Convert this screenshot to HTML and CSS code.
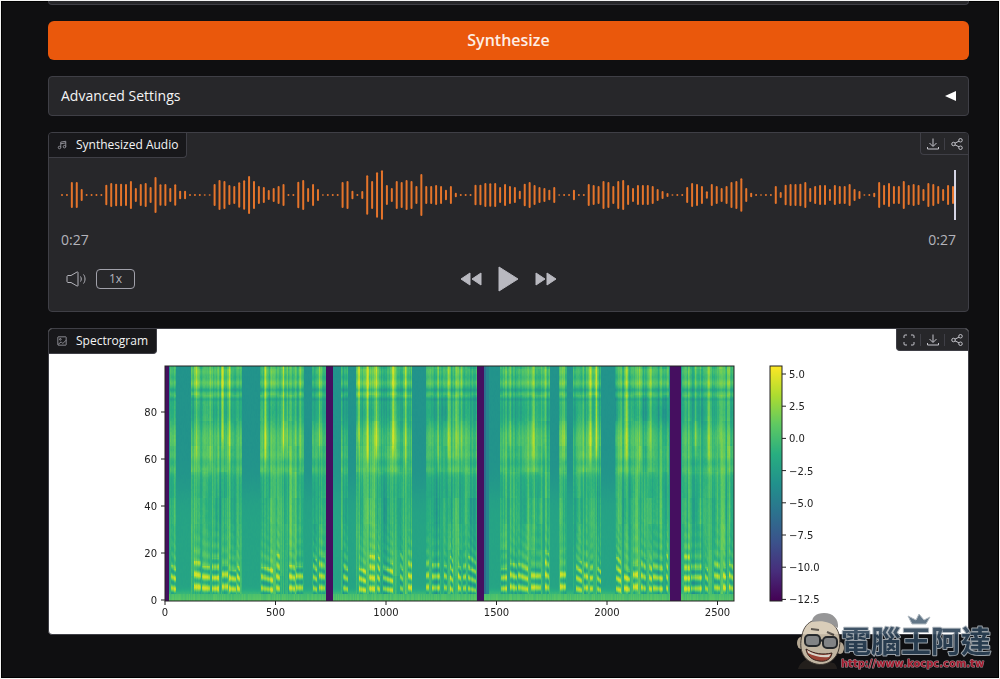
FILE: index.html
```html
<!DOCTYPE html>
<html lang="en">
<head>
  <meta charset="UTF-8">
  <meta name="viewport" content="width=device-width, initial-scale=1.0">
  <title>Synthesize</title>
  <link rel="stylesheet" href="styles.css">
</head>
<body>
  <main class="app">
    <div class="block block-end"></div>
    <button type="button" class="primary">Synthesize</button>
    <button type="button" class="block accordion" aria-expanded="false">
      <span>Advanced Settings</span>
      <svg width="11" height="10" viewBox="0 0 11 10"><path d="M0 5 11 0V10Z" fill="#fff"/></svg>
    </button>

    <section class="block">
      <header class="block-header">
        <h2 class="block-label">
          <svg class="icon" width="10" height="10" viewBox="0 0 24 24"><path d="M9 18V5l12-2v13M9 9l12-2"/><circle cx="6" cy="18" r="3"/><circle cx="18" cy="16" r="3"/></svg>
          Synthesized Audio
        </h2>
        <div class="tools">
          <button type="button" aria-label="Download"><svg class="icon" width="12" height="12" viewBox="0 0 24 24"><path d="M12 1v15M5 10l7 7 7-7M1 18v4h22v-4"/></svg></button>
          <button type="button" aria-label="Share"><svg class="icon" width="12" height="12" viewBox="0 0 24 24"><circle cx="19" cy="4.500" r="3.500"/><circle cx="5" cy="12" r="3.500"/><circle cx="19" cy="19.500" r="3.500"/><path d="m8 10.300 8-4M8 13.700l8 4"/></svg></button>
        </div>
      </header>
      <div class="player">
        <svg id="waveform" class="waveform" viewBox="0 0 895 50" preserveAspectRatio="none"></svg>
        <div class="times"><time>0:27</time><time>0:27</time></div>
        <div class="controls">
          <div class="controls-left">
            <button type="button" aria-label="Volume"><svg class="icon" width="21" height="16" viewBox="0 0 21 16"><path d="M1 5.500C1 5 1.500 4.500 2 4.500h3L11 1c.7-.3 1 0 1 .6v12.800c0 .6-.3.900-1 .6L5 11.500H2c-.5 0-1-.5-1-1ZM14.500 5.500c1 1.500 1 3.500 0 5M17.500 3.500c2 2.500 2 6.500 0 9"/></svg></button>
            <button type="button" class="speed">1x</button>
          </div>
          <div class="controls-main">
            <button type="button" aria-label="Rewind"><svg class="solid" width="22" height="16" viewBox="0 0 22 16"><path d="M1 8 10 2v12ZM12 8l9-6v12Z"/></svg></button>
            <button type="button" aria-label="Play"><svg class="solid" width="21" height="26" viewBox="0 0 21 26"><path d="M1 1v24l19-12Z"/></svg></button>
            <button type="button" aria-label="Forward"><svg class="solid" width="22" height="16" viewBox="0 0 22 16"><path d="m10 8-9-6v12ZM21 8l-9-6v12Z"/></svg></button>
          </div>
        </div>
      </div>
    </section>

    <section class="block picture">
      <header class="block-header overlay">
        <h2 class="block-label">
          <svg class="icon" width="10" height="10" viewBox="0 0 24 24"><rect x="2" y="2" width="20" height="20" rx="1"/><circle cx="8" cy="8" r="2"/><path d="m3 20 7-6 4 4 8-8"/></svg>
          Spectrogram
        </h2>
        <div class="tools">
          <button type="button" aria-label="Fullscreen"><svg class="icon" width="12" height="12" viewBox="0 0 24 24"><path d="M2 8V4a2 2 0 0 1 2-2h4M16 2h4a2 2 0 0 1 2 2v4M22 16v4a2 2 0 0 1-2 2h-4M8 22H4a2 2 0 0 1-2-2v-4"/></svg></button>
          <button type="button" aria-label="Download"><svg class="icon" width="12" height="12" viewBox="0 0 24 24"><path d="M12 1v15M5 10l7 7 7-7M1 18v4h22v-4"/></svg></button>
          <button type="button" aria-label="Share"><svg class="icon" width="12" height="12" viewBox="0 0 24 24"><circle cx="19" cy="4.500" r="3.500"/><circle cx="5" cy="12" r="3.500"/><circle cx="19" cy="19.500" r="3.500"/><path d="m8 10.300 8-4M8 13.700l8 4"/></svg></button>
        </div>
      </header>
      <svg class="plot" viewBox="0 0 919 305">
        <defs>
          <linearGradient id="viridis" x1="0" y1="1" x2="0" y2="0">
            <stop offset="0" stop-color="#440154"/><stop offset=".125" stop-color="#472d7b"/>
            <stop offset=".25" stop-color="#3b528b"/><stop offset=".375" stop-color="#2c728e"/>
            <stop offset=".5" stop-color="#21918c"/><stop offset=".625" stop-color="#28ae80"/>
            <stop offset=".75" stop-color="#5ec962"/><stop offset=".875" stop-color="#addc30"/>
            <stop offset="1" stop-color="#fde725"/>
          </linearGradient>
        </defs>
        <foreignObject x="116" y="37" width="569" height="235"><canvas id="spectrogram" class="heatmap" width="569" height="235"></canvas></foreignObject>
        <rect class="frame" x="116" y="37" width="569" height="235"/>
        <rect class="frame" x="721" y="37" width="12" height="235" fill="url(#viridis)"/>
        <g id="axes"></g>
      </svg>
    </section>
  </main>

  <svg class="watermark" width="200" height="62" viewBox="0 0 200 62">
    <path d="M5 60c2-7 7-9 12-11l24 5c2 2 3 4 3 6Z" fill="#26221f"/>
    <ellipse cx="8" cy="34" rx="4" ry="6" fill="#c7b8a2"/><ellipse cx="47" cy="39" rx="4" ry="6" fill="#c7b8a2"/>
    <path d="M9 26C12 11 26 7 37 13c10 6 12 19 8 30-4 10-13 14-22 12C11 52 5 42 9 26Z" fill="#d5c8b2" stroke="#423b34"/>
    <path d="M19 13c0-5 4-9 12-9 9 0 15 6 14 15-8-6-15-8-26-6Z" fill="#8b8b8c"/>
    <path d="m18 20 8 1M34 23l7 3" stroke="#4c453e" stroke-width="2"/>
    <g fill="#8e9193" stroke="#292c2f" stroke-width="2"><rect x="12" y="26" width="15" height="11" rx="4"/><rect x="30" y="28" width="14" height="11" rx="4"/><path d="m27 31 3 1"/></g>
    <path d="M13 40c8 5 17 6 26 4-1 7-7 9-13 8-7-1-12-5-13-12Z" fill="#aa4939" stroke="#39251e"/>
    <path d="M14 41c8 5 16 6 24 4l-2 3c-8 1-15-1-21-4Z" fill="#eee9dd"/>
    <path d="m115 7 4 8h14l4-7-6 3-5-6-3 6Z" fill="#53697c" stroke="#a9b3bb"/>
    <text class="watermark-name" x="48" y="43">電腦王阿達</text>
    <text class="watermark-url" x="48" y="58">http://www.kocpc.com.tw</text>
  </svg>

  <script src="script.js"></script>
</body>
</html>
```

FILE: styles.css
```css
* {
  box-sizing: border-box;
}
body {
  margin: 0;
  min-height: 100vh;
  position: relative;
  border: 1px solid #f4f4f4;
  background: #0f0f11;
  box-shadow: inset 0 0 0 1px #000;
  color: #f4f4f5;
  font-family: "Open Sans", "Noto Sans", sans-serif;
  font-size: 14px;
  line-height: 20px;
}
button {
  display: flex;
  align-items: center;
  justify-content: center;
  padding: 0;
  border: 0;
  background: none;
  color: inherit;
  font: inherit;
  cursor: pointer;
}
.app {
  display: flex;
  flex-direction: column;
  gap: 16px;
  padding: 0 30px 0 47px;
}
.block {
  overflow: hidden;
  border: 1px solid #3f3f46;
  border-radius: 4px;
  background: #27272a;
}
.block-end {
  height: 4px;
  border-top: 0;
  border-radius: 0 0 4px 4px;
}
.primary {
  height: 39px;
  padding-bottom: 2px;
  border-radius: 6px;
  background: #ea580c;
  color: #fdeee5;
  font-size: 16px;
  font-weight: 600;
}
.accordion {
  justify-content: space-between;
  height: 40px;
  padding: 0 12px;
}
.block-header {
  display: flex;
  align-items: flex-start;
  justify-content: space-between;
}
.block-label {
  display: flex;
  align-items: center;
  gap: 9px;
  height: 25px;
  margin: 0;
  padding: 0 8px;
  border: solid #3f3f46;
  border-width: 0 1px 1px 0;
  border-radius: 0 0 4px 0;
  background: #18181b;
  font-size: 12px;
  font-weight: 400;
}
.tools {
  display: flex;
  align-items: center;
  height: 22px;
  border: solid #3f3f46;
  border-width: 0 0 1px 1px;
  border-radius: 0 0 0 4px;
  background: #27272a;
  color: #c4c4ca;
}
.tools button {
  width: 23px;
}
.tools button + button {
  width: 24px;
  border-left: 1px solid #3f3f46;
}
.icon {
  fill: none;
  stroke: currentColor;
  stroke-width: 2px;
}
.block-label .icon {
  color: #a1a1aa;
}
.player {
  padding: 12px;
  color: #b4b4bb;
}
.waveform {
  display: block;
  width: 100%;
  height: 50px;
}
.waveform .bar {
  fill: #e5742a;
}
.waveform .cursor {
  fill: #d4d4e4;
}
.times {
  display: flex;
  justify-content: space-between;
  padding: 10px 0 9px;
}
.controls {
  display: grid;
  grid-template-columns: 1fr auto 1fr;
  align-items: center;
  height: 40px;
}
.controls-left {
  display: flex;
  align-items: center;
  gap: 9px;
  padding-left: 5px;
}
.controls-left .icon {
  stroke-width: 1px;
}
.speed {
  width: 39px;
  height: 20px;
  border: 1px solid #a1a1aa;
  border-radius: 4px;
  font-size: 12px;
}
.controls-main {
  display: flex;
  align-items: center;
  gap: 16px;
}
.solid {
  fill: #b9b9c0;
  stroke: #b9b9c0;
  stroke-linejoin: round;
}
.picture {
  position: relative;
  background: #fff;
}
.overlay {
  position: absolute;
  top: 0;
  left: 0;
  right: 0;
}
.plot {
  display: block;
  width: 100%;
  font-family: "DejaVu Sans", sans-serif;
  font-size: 10px;
}
.heatmap {
  display: block;
}
.frame {
  stroke: #222;
}
rect.frame:not([fill]) {
  fill: none;
}
.plot text {
  fill: #222;
}
.plot line {
  stroke: #222;
}
.watermark {
  position: absolute;
  right: 6px;
  bottom: 7px;
  opacity: .9;
}
.watermark text {
  paint-order: stroke;
  stroke-linejoin: round;
}
.watermark-name {
  fill: #2c4257;
  stroke: #a9b1b8;
  stroke-width: 2px;
  font-family: "Noto Sans CJK TC", sans-serif;
  font-size: 30px;
  font-weight: 700;
}
.watermark-url {
  fill: #b51f35;
  stroke: #b9a5aa;
  stroke-width: 1px;
  font-family: "DejaVu Sans", sans-serif;
  font-size: 10px;
  font-weight: 700;
}
```

FILE: script.js
```js
const SVG = 'http://www.w3.org/2000/svg';

function add(parent, tag, attrs, text) {
  const el = document.createElementNS(SVG, tag);
  for (const key in attrs) el.setAttribute(key, attrs[key]);
  if (text !== undefined) el.textContent = text;
  parent.appendChild(el);
}

// Peak level of each bar, 148 is full scale
const peaks = [
  6, 6, 78, 78, 36, 6, 6, 6, 6, 62, 72, 68, 68, 66, 84, 42, 66, 72, 48, 108, 64, 66, 42, 64, 26, 26, 6, 6, 6, 4, 4,
  66, 90, 84, 60, 54, 76, 88, 114, 84, 54, 48, 30, 42, 54, 66, 6, 6, 80, 90, 42, 66, 36, 4, 6, 6, 6, 78, 84, 26,
  6, 24, 118, 84, 136, 148, 60, 42, 84, 78, 90, 84, 54, 126, 54, 54, 60, 54, 32, 54, 14, 6, 6, 6,
  62, 62, 72, 70, 72, 48, 66, 54, 48, 26, 68, 78, 60, 48, 42, 32, 48, 4, 6, 6, 32, 6, 6,
  66, 60, 54, 84, 78, 54, 84, 90, 60, 42, 60, 60, 60, 54, 36, 24, 12, 4, 6, 6,
  48, 72, 66, 54, 22, 66, 54, 42, 54, 78, 84, 100, 42, 14, 6, 4, 6, 6, 54, 18, 62, 66, 66, 68, 78, 42, 54, 60, 60,
  36, 60, 54, 54, 66, 36, 24, 4, 6, 14, 78, 60, 72, 54, 54, 84, 60, 66, 60, 36, 72, 66, 54, 36, 60, 54
];

const waveform = document.getElementById('waveform');
const step = 891 / (peaks.length - 1);
peaks.forEach((peak, i) => {
  const h = peak / 3;
  add(waveform, 'rect', { class: 'bar', x: i * step, y: 25 - h / 2, width: 2, height: h, rx: 1 });
});
add(waveform, 'rect', { class: 'cursor', x: 893, y: 0, width: 2, height: 50 });

// Axes
const axes = document.getElementById('axes');
for (let v = 0; v <= 2500; v += 500) {
  const x = 116 + v * 0.221;
  add(axes, 'line', { x1: x, x2: x, y1: 272, y2: 276 });
  add(axes, 'text', { x: x, y: 287, 'text-anchor': 'middle' }, v);
}
for (let v = 0; v <= 80; v += 20) {
  const y = 271 - v * 2.35;
  add(axes, 'line', { x1: 112, x2: 116, y1: y, y2: y });
  add(axes, 'text', { x: 108, y: y + 4, 'text-anchor': 'end' }, v);
}
['5.0', '2.5', '0.0', '−2.5', '−5.0', '−7.5', '−10.0', '−12.5'].forEach((label, i) => {
  const y = 45 + i * 32.2;
  add(axes, 'line', { x1: 733, x2: 737, y1: y, y2: y });
  add(axes, 'text', { x: 740, y: y + 4 }, label);
});

// Spectrogram
const viridis = [
  [68, 1, 84], [71, 45, 123], [59, 82, 139], [44, 114, 142], [33, 145, 140],
  [40, 174, 128], [94, 201, 98], [173, 220, 48], [253, 231, 37]
];
const speech = [
  [5, 11], [26, 77], [95, 139], [147, 161], [176, 183], [191, 247], [261, 312],
  [335, 385], [394, 402], [408, 436], [450, 504], [517, 569]
];
const pauses = [[0, 4], [161, 168], [312, 319], [505, 516]];
// Voiced syllables, one run of harmonics each
const voiced = [
  [6, 11], [29, 36], [37, 45], [47, 54], [57, 63], [64, 71], [72, 75], [96, 108], [111, 115], [124, 130], [131, 138],
  [148, 152], [154, 160], [178, 183], [194, 201], [204, 210], [212, 215], [218, 228], [235, 238], [243, 247],
  [261, 264], [267, 275], [279, 282], [285, 288], [293, 296], [298, 301], [303, 311], [336, 342], [345, 352],
  [353, 363], [366, 376], [380, 384], [395, 401], [402, 406], [411, 417], [419, 423], [425, 428], [432, 436],
  [451, 456], [459, 465], [468, 473], [476, 481], [484, 487], [488, 498], [501, 503], [519, 525], [526, 537],
  [540, 543], [549, 555], [558, 561], [564, 568]
];
// Loud columns in the upper band
const loud = [31, 45, 57, 64, 100, 118, 122, 135, 154, 193, 202, 211, 228, 240, 272, 283, 291, 296, 344, 368, 379, 398, 425, 431, 461, 475, 485, 530, 543, 554, 563];
const strong = [57, 100, 118, 193, 202, 211, 228, 425, 431];

function rand(n) {
  const s = Math.sin(n * 127.1 + 11.7) * 43758.5453;
  return s - Math.floor(s);
}
function smooth(n) {
  const i = Math.floor(n), f = n - i;
  return rand(i) * (1 - f) + rand(i + 1) * f;
}
function inside(list, x) {
  return list.some(([a, b]) => x >= a && x < b);
}
function bump(f, center, width) {
  return Math.exp(-(((f - center) / width) ** 2));
}
function level(x, f) {
  if (inside(pauses, x)) return 0.04;
  if (x >= 319 && x < 324 && f > 3) return x < 321 ? 0.36 : 0.45;
  const grain = (rand(x * 313 + Math.floor(f) * 17) - 0.5) * 0.02;
  const floor = 0.51 + 0.07 / (1 + Math.exp((f - 47) / 4));
  if (f < 3) return 0.71 + rand(x) * 0.05 - f * 0.012;
  if (!inside(speech, x)) return floor + grain / 2 + bump(f, 3, 2) * 0.08;

  const col = smooth(x / 2.2);
  const group = smooth(x / 8 + 400);
  const fine = rand(x + 900);
  let v = floor + 0.01 + col * 0.13 + (fine - 0.5) * 0.1 + grain;
  v += 0.06 / (1 + Math.exp((50 - f) / 3));
  v += (bump(f, 93, 1.5) + bump(f, 88, 1) * 0.6 + bump(f, 98, 2) * 0.7) * 0.08;
  v -= (bump(f, 86, 0.7) + bump(f, 90, 0.7)) * 0.06;
  v += (bump(f, 69, 7) + bump(f, 56, 2) * 0.9 + bump(f, 62, 2) * 0.6) * 0.07 * (0.4 + group);
  v -= bump(f, 80, 6) * 0.09 * (1 - group);
  v += (smooth(x / 3 + 50) - 0.5) * 0.12 * bump(f, 38, 16);
  v += (smooth(x / 5 + Math.floor(f / 11) * 71) - 0.5) * 0.06;
  for (const c of loud) {
    if (Math.abs(c - x) > 3) continue;
    const reach = 1 / (1 + Math.exp((58 + rand(c) * 10 - f) / 2));
    v += reach * (strong.includes(c) ? 0.2 : 0.11) * bump(x, c, 1.5);
  }
  // harmonics follow the pitch of their syllable and fade out going up
  const run = voiced.find(([a, b]) => x >= a && x < b);
  if (run) {
    const id = run[0];
    const t = (x - run[0]) / (run[1] - run[0]);
    const pitch = 4.5 + rand(id) * 0.8 - t * (rand(id + 7) * 0.9 - 0.1);
    const wave = Math.cos(f / pitch * Math.PI * 2 - 1.2);
    const top = 13 + rand(id + 3) * 8;
    const fade = f < top ? 1 : Math.exp((top - f) / 9) * 0.45;
    const edge = f < 14 ? 1 : 0.55 + fine * 0.3;
    v += fade * edge * (0.08 + wave * 0.15);
  }
  return v;
}

const canvas = document.getElementById('spectrogram');
const ctx = canvas.getContext('2d');
const image = ctx.createImageData(canvas.width, canvas.height);
for (let y = 0; y < canvas.height; y++) {
  const f = (canvas.height - y) / 2.35;
  for (let x = 0; x < canvas.width; x++) {
    const v = Math.max(0, Math.min(0.93, level(x, f))) * 8;
    const i = Math.min(7, Math.floor(v));
    const p = (y * canvas.width + x) * 4;
    for (let c = 0; c < 3; c++) {
      image.data[p + c] = viridis[i][c] + (viridis[i + 1][c] - viridis[i][c]) * (v - i);
    }
    image.data[p + 3] = 255;
  }
}
ctx.putImageData(image, 0, 0);
```
